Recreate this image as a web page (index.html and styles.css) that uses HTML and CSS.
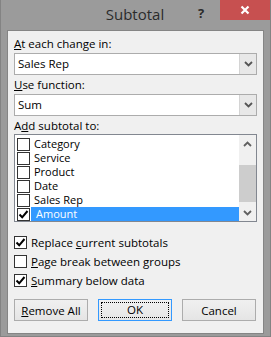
FILE: index.html
```html
<!DOCTYPE html>
<html lang="en">
<head>
    <meta charset="UTF-8">
    <title>Subtotal</title>
    <link rel="stylesheet" href="styles.css">
</head>
<body>
    <div class="window">
        <div class="titlebar">
            <span class="title">Subtotal</span>
            <span class="help">?</span>
            <span class="close">
                <svg width="10" height="10" viewBox="0 0 10 10"><path d="M1.5 1.5 L8.5 8.5 M8.5 1.5 L1.5 8.5" stroke="#fff" stroke-width="2.2"/></svg>
            </span>
        </div>

        <div class="client">
            <div class="label label-first"><u>A</u>t each change in:</div>
            <div class="combo">
                <span class="combo-value">Sales Rep</span>
                <span class="combo-btn">
                    <svg width="9" height="6" viewBox="0 0 9 6"><path d="M1 1 L4.5 4.5 L8 1" fill="none" stroke="#555" stroke-width="1.8"/></svg>
                </span>
            </div>

            <div class="label"><u>U</u>se function:</div>
            <div class="combo">
                <span class="combo-value">Sum</span>
                <span class="combo-btn">
                    <svg width="9" height="6" viewBox="0 0 9 6"><path d="M1 1 L4.5 4.5 L8 1" fill="none" stroke="#555" stroke-width="1.8"/></svg>
                </span>
            </div>

            <div class="label">A<u>d</u>d subtotal to:</div>
            <div class="list">
                <div class="list-items">
                    <div class="item"><span class="box"></span><span class="item-text">Category</span></div>
                    <div class="item"><span class="box"></span><span class="item-text">Service</span></div>
                    <div class="item"><span class="box"></span><span class="item-text">Product</span></div>
                    <div class="item"><span class="box"></span><span class="item-text">Date</span></div>
                    <div class="item"><span class="box"></span><span class="item-text">Sales Rep</span></div>
                    <div class="item selected">
                        <span class="box"><svg width="11" height="11" viewBox="0 0 11 11"><path d="M1.5 5.5 L4.2 8.3 L9.5 2" fill="none" stroke="#000" stroke-width="2"/></svg></span>
                        <span class="item-text">Amount</span>
                    </div>
                </div>
                <div class="scrollbar">
                    <span class="arrow">
                        <svg width="9" height="6" viewBox="0 0 9 6"><path d="M1 5 L4.5 1.5 L8 5" fill="none" stroke="#606060" stroke-width="1.8"/></svg>
                    </span>
                    <div class="track"><div class="thumb"></div></div>
                    <span class="arrow">
                        <svg width="9" height="6" viewBox="0 0 9 6"><path d="M1 1 L4.5 4.5 L8 1" fill="none" stroke="#606060" stroke-width="1.8"/></svg>
                    </span>
                </div>
            </div>

            <div class="options">
                <div class="option">
                    <span class="box"><svg width="11" height="11" viewBox="0 0 11 11"><path d="M1.5 5.5 L4.2 8.3 L9.5 2" fill="none" stroke="#000" stroke-width="2"/></svg></span>
                    <span>Replace <u>c</u>urrent subtotals</span>
                </div>
                <div class="option">
                    <span class="box"></span>
                    <span><u>P</u>age break between groups</span>
                </div>
                <div class="option">
                    <span class="box"><svg width="11" height="11" viewBox="0 0 11 11"><path d="M1.5 5.5 L4.2 8.3 L9.5 2" fill="none" stroke="#000" stroke-width="2"/></svg></span>
                    <span><u>S</u>ummary below data</span>
                </div>
            </div>

            <div class="buttons">
                <button class="btn"><u>R</u>emove All</button>
                <button class="btn btn-default"><span class="focus">OK</span></button>
                <button class="btn">Cancel</button>
            </div>
        </div>
    </div>
</body>
</html>
```

FILE: styles.css
```css
* {
    margin: 0;
    padding: 0;
    box-sizing: border-box;
}
body {
    font-family: 'Open Sans', 'Noto Sans', sans-serif;
    font-size: 11.5px;
    color: #000;
    background-color: #9b9b9b;
}
.window {
    width: 271px;
    height: 337px;
    background-color: #9b9b9b;
    border: 1px solid #838383;
    border-top: none;
    display: flex;
    flex-direction: column;
}
.titlebar {
    position: relative;
    height: 30px;
    flex-shrink: 0;
}
.title {
    display: block;
    text-align: center;
    font-size: 15px;
    line-height: 28px;
    color: #2b2b2b;
    padding-right: 1px;
}
.help {
    position: absolute;
    left: 197px;
    top: 4px;
    font-weight: bold;
    font-size: 13px;
    color: #2b2b2b;
}
.close {
    position: absolute;
    right: 0;
    top: 0;
    width: 50px;
    height: 20px;
    background-color: #c75050;
    display: flex;
    align-items: center;
    justify-content: center;
}
.client {
    margin: 0 6px 2px;
    height: 304px;
    background-color: #f0f0f0;
    border: 1px solid #858585;
    padding: 0 6px;
}
.label {
    height: 16px;
    line-height: 16px;
    margin-top: 2px;
    margin-bottom: 1px;
}
.label-first {
    margin-top: 5px;
}
.combo {
    display: flex;
    height: 22px;
    background-color: #fff;
    border: 1px solid #acacac;
}
.combo-value {
    flex: 1;
    line-height: 20px;
    padding-left: 3px;
}
.combo-btn {
    width: 17px;
    background-color: #e8e8e8;
    border-left: 1px solid #d4d4d4;
    display: flex;
    align-items: center;
    justify-content: center;
}
.list {
    display: flex;
    height: 88px;
    margin-top: -1px;
    background-color: #fff;
    border: 1px solid #828790;
}
.list-items {
    flex: 1;
    padding: 2px 0 0 2px;
}
.item {
    display: flex;
    align-items: center;
    height: 14px;
    font-size: 11px;
}
.box {
    width: 13px;
    height: 13px;
    border: 1px solid #333;
    background-color: #fff;
    display: flex;
    align-items: center;
    justify-content: center;
    flex-shrink: 0;
}
.item-text {
    flex: 1;
    height: 14px;
    line-height: 14px;
    padding-left: 3px;
    margin-left: 1px;
}
.selected .item-text {
    background-color: #3399ff;
    color: #fff;
    padding-left: 5px;
}
.scrollbar {
    width: 17px;
    background-color: #f0f0f0;
    display: flex;
    flex-direction: column;
}
.arrow {
    height: 17px;
    display: flex;
    align-items: center;
    justify-content: center;
}
.track {
    flex: 1;
    display: flex;
    flex-direction: column;
    justify-content: flex-end;
    padding-bottom: 2px;
}
.thumb {
    height: 37px;
    background-color: #cdcdcd;
}
.options {
    margin-top: 11px;
}
.option {
    display: flex;
    align-items: center;
    gap: 4px;
    height: 19px;
}
.buttons {
    display: flex;
    gap: 10px;
    margin-top: 9px;
}
.btn {
    width: 74px;
    height: 22px;
    font-family: inherit;
    font-size: 11.5px;
    color: #000;
    background: linear-gradient(#f0f0f0, #e5e5e5);
    border: 1px solid #acacac;
}
.btn-default {
    border-color: #3399ff;
    padding: 2px;
}
.focus {
    display: block;
    height: 100%;
    border: 1px dotted #000;
    line-height: 14px;
}
```
